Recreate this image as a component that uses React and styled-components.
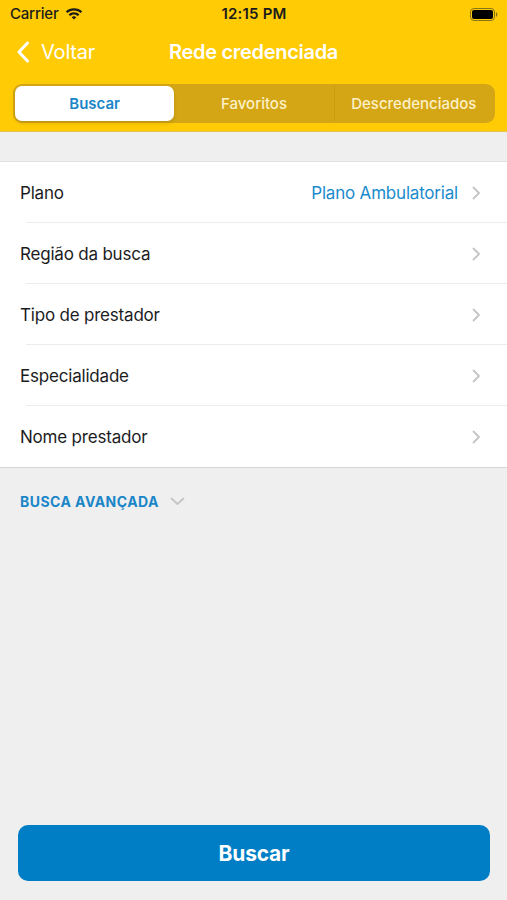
import React from "react"
import styled, { createGlobalStyle } from "styled-components"

const GlobalStyle = createGlobalStyle`
  html, body {
    margin: 0;
    padding: 0;
    background: #efeff0;
  }
  body {
    font-family: Inter, "Noto Sans", "Liberation Sans", sans-serif;
    -webkit-font-smoothing: antialiased;
  }
`

const rows = [
  { label: "Plano", value: "Plano Ambulatorial" },
  { label: "Região da busca" },
  { label: "Tipo de prestador" },
  { label: "Especialidade" },
  { label: "Nome prestador" },
]

const tabs = ["Buscar", "Favoritos", "Descredenciados"]

function Chevron() {
  return (
    <ChevronIcon width="9" height="14" viewBox="0 0 9 14">
      <path d="M1.5 1.5 L7 7 L1.5 12.5" fill="none" stroke="#c5c5c8" strokeWidth="1.8" strokeLinecap="round" strokeLinejoin="round" />
    </ChevronIcon>
  )
}

function Wifi() {
  return (
    <svg width="18" height="13" viewBox="0 0 18 13">
      <path d="M9 1.2c3.2 0 6.1 1.2 8.2 3.2l-1.6 1.7C13.9 4.5 11.6 3.5 9 3.5S4.1 4.5 2.4 6.1L0.8 4.4C2.9 2.4 5.8 1.2 9 1.2z" fill="#1b1b1b" />
      <path d="M9 5.3c2.1 0 4 .8 5.4 2.1l-1.6 1.7C11.8 8.2 10.5 7.6 9 7.6s-2.8.6-3.8 1.5L3.6 7.4C5 6.1 6.9 5.3 9 5.3z" fill="#1b1b1b" />
      <path d="M9 9.3c.9 0 1.7.3 2.3.9L9 12.6 6.7 10.2c.6-.6 1.4-.9 2.3-.9z" fill="#1b1b1b" />
    </svg>
  )
}

function Battery() {
  return (
    <svg width="28" height="13" viewBox="0 0 28 13">
      <rect x="0.5" y="0.5" width="24" height="12" rx="3.5" fill="none" stroke="#8a7418" strokeWidth="1" />
      <rect x="2" y="2" width="21" height="9" rx="2" fill="#000" />
      <path d="M26 4.3c.9.3 1.4 1.1 1.4 2.2s-.5 1.9-1.4 2.2z" fill="#8a7418" />
    </svg>
  )
}

export default function App() {
  return (
    <Screen>
      <GlobalStyle />
      <Header>
        <StatusBar>
          <Carrier>
            Carrier <Wifi />
          </Carrier>
          <Clock>12:15 PM</Clock>
          <BatteryBox>
            <Battery />
          </BatteryBox>
        </StatusBar>
        <NavBar>
          <BackButton>
            <svg width="14" height="22" viewBox="0 0 14 22">
              <path d="M11.5 2 L3 11 L11.5 20" fill="none" stroke="#fff" strokeWidth="3" strokeLinecap="round" strokeLinejoin="round" />
            </svg>
            Voltar
          </BackButton>
          <Title>Rede credenciada</Title>
        </NavBar>
        <Segmented>
          {tabs.map((t, i) => (
            <Segment key={t} active={i === 0} divider={i === 2}>
              {t}
            </Segment>
          ))}
        </Segmented>
      </Header>
      <Spacer />
      <List>
        {rows.map((r, i) => (
          <Row key={r.label} last={i === rows.length - 1}>
            <Label>{r.label}</Label>
            <Right>
              {r.value && <Value>{r.value}</Value>}
              <Chevron />
            </Right>
          </Row>
        ))}
      </List>
      <Advanced>
        BUSCA AVANÇADA
        <svg width="15" height="9" viewBox="0 0 15 9">
          <path d="M1.5 1.5 L7.5 7 L13.5 1.5" fill="none" stroke="#c5c5c8" strokeWidth="1.8" strokeLinecap="round" strokeLinejoin="round" />
        </svg>
      </Advanced>
      <Grow />
      <Footer>
        <SearchButton>Buscar</SearchButton>
      </Footer>
    </Screen>
  )
}

const Screen = styled.div`
  display: flex;
  flex-direction: column;
  width: 507px;
  height: 900px;
  background: #efeff0;
  overflow: hidden;
`

const Header = styled.div`
  background: #ffcb05;
  padding-bottom: 8px;
  box-shadow: 0 1px 0 #e8c24a;
`

const StatusBar = styled.div`
  display: grid;
  grid-template-columns: 1fr auto 1fr;
  align-items: center;
  height: 27px;
  padding: 0 9px 0 10px;
  font-size: 15px;
  color: #1b1b1b;
`

const Carrier = styled.div`
  display: flex;
  align-items: center;
  gap: 6px;
  font-weight: 500;
  letter-spacing: -0.2px;
`

const Clock = styled.div`
  font-weight: 600;
  letter-spacing: 0.2px;
`

const BatteryBox = styled.div`
  display: flex;
  justify-content: flex-end;
  padding-top: 1px;
`

const NavBar = styled.div`
  position: relative;
  display: flex;
  align-items: center;
  justify-content: center;
  height: 50px;
  margin-bottom: 7px;
`

const BackButton = styled.div`
  position: absolute;
  left: 16px;
  top: 0;
  bottom: 0;
  display: flex;
  align-items: center;
  gap: 11px;
  color: #fff;
  font-size: 20px;
  letter-spacing: -0.2px;
`

const Title = styled.div`
  color: #fff;
  font-size: 20px;
  font-weight: 600;
  letter-spacing: -0.3px;
`

const Segmented = styled.div`
  display: grid;
  grid-template-columns: repeat(3, 1fr);
  margin: 0 12px 0 13px;
  padding: 2px;
  height: 39px;
  box-sizing: border-box;
  border-radius: 9px;
  background: #d4a616;
`

const Segment = styled.div`
  display: flex;
  align-items: center;
  justify-content: center;
  border-radius: 7px;
  font-size: 15px;
  font-weight: ${({ active }) => (active ? 600 : 500)};
  color: ${({ active }) => (active ? "#1a86c8" : "#fdf1c8")};
  background: ${({ active }) => (active ? "#fff" : "transparent")};
  box-shadow: ${({ active }) => (active ? "0 2px 4px rgba(0,0,0,0.12)" : "none")};
  border-left: ${({ divider }) => (divider ? "1px solid #c99d12" : "none")};
  ${({ divider }) => divider && "border-radius: 0;"}
`

const Spacer = styled.div`
  height: 30px;
`

const List = styled.div`
  background: #fff;
  border-top: 1px solid #e2e2e4;
  border-bottom: 1px solid #d8d8da;
`

const Row = styled.div`
  position: relative;
  display: flex;
  align-items: center;
  justify-content: space-between;
  height: 61px;
  padding: 0 26px 0 20px;
  ${({ last }) => !last && `
    &::after {
      content: "";
      position: absolute;
      left: 26px;
      right: 0;
      bottom: 0;
      height: 1px;
      background: #ececee;
    }
  `}
`

const Label = styled.span`
  font-size: 17px;
  color: #1c1c1e;
  letter-spacing: -0.2px;
`

const Right = styled.div`
  display: flex;
  align-items: center;
  gap: 14px;
`

const Value = styled.span`
  font-size: 17px;
  color: #1a8bcc;
  letter-spacing: -0.2px;
`

const ChevronIcon = styled.svg`
  display: block;
`

const Advanced = styled.div`
  display: flex;
  align-items: center;
  gap: 11px;
  padding: 25px 20px;
  font-size: 14px;
  font-weight: 700;
  color: #1a86c8;
  letter-spacing: 0.45px;
`

const Grow = styled.div`
  flex: 1;
`

const Footer = styled.div`
  padding: 0 17px 19px 18px;
`

const SearchButton = styled.div`
  display: flex;
  align-items: center;
  justify-content: center;
  height: 56px;
  border-radius: 10px;
  background: #007ec5;
  color: #fff;
  font-size: 21px;
  font-weight: 700;
  letter-spacing: -0.2px;
`
